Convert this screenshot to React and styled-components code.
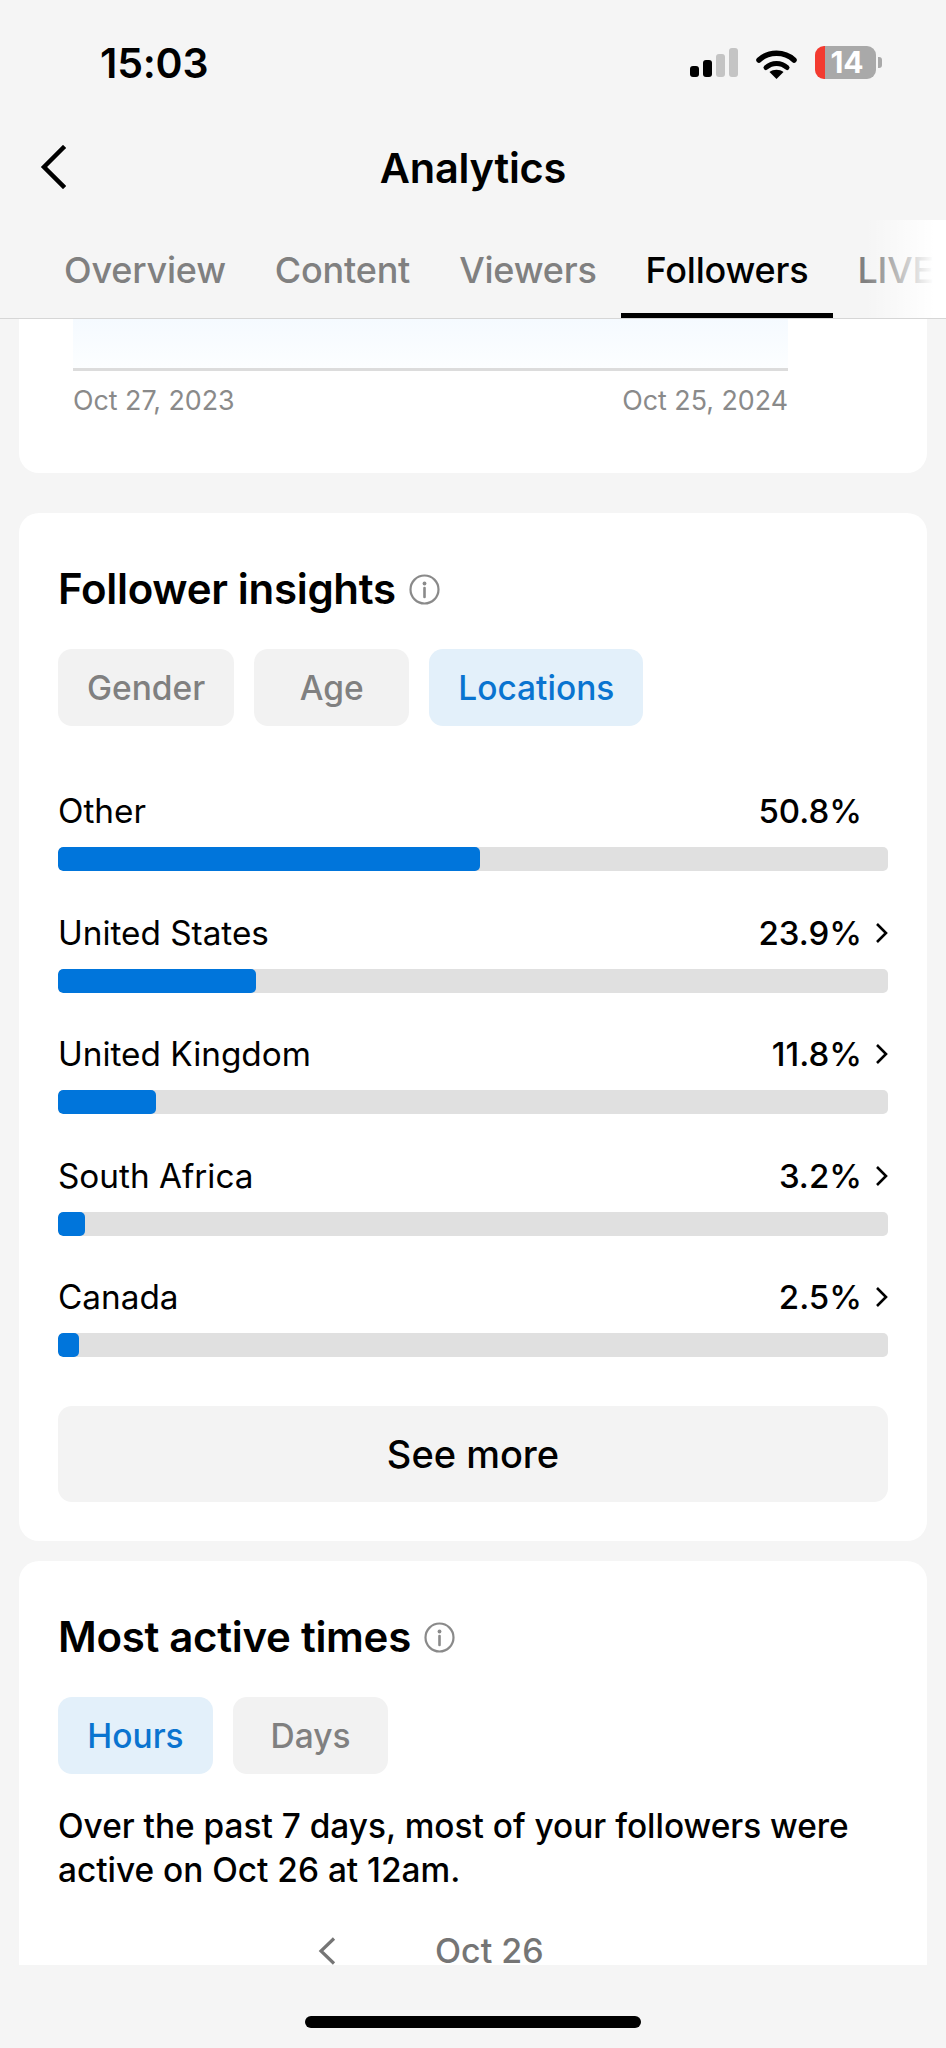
import React from "react";
import styled, { createGlobalStyle } from "styled-components";

const Global = createGlobalStyle`
  html, body {
    margin: 0;
    padding: 0;
    background: #f5f5f5;
  }
  * {
    box-sizing: border-box;
  }
`;

const Page = styled.div`
  width: 946px;
  height: 2048px;
  display: flex;
  flex-direction: column;
  overflow: hidden;
  background: #f5f5f5;
  color: #000;
  font-family: Inter, "Liberation Sans", sans-serif;
`;

const StatusBar = styled.div`
  height: 125px;
  flex: none;
  padding: 44px 64px 0 100px;
  display: flex;
  justify-content: space-between;
  align-items: flex-start;
`;

const Clock = styled.div`
  font-size: 41px;
  line-height: 38px;
  font-weight: 600;
  letter-spacing: -0.2px;
`;

const StatusIcons = styled.div`
  display: flex;
  align-items: flex-end;
  margin-top: 2px;
`;

const Signal = styled.div`
  display: flex;
  align-items: flex-end;
  gap: 4px;
  height: 29px;
  margin-right: 18px;
  margin-bottom: 2px;
`;

const SignalBar = styled.span`
  width: 9px;
  height: ${(props) => props.h}px;
  border-radius: 3px;
  background: ${(props) => (props.on ? "#000" : "#c4c4c4")};
`;

const Battery = styled.div`
  width: 61px;
  height: 33px;
  margin-left: 18px;
  border-radius: 9px;
  display: flex;
  align-items: center;
  justify-content: center;
  padding-left: 3px;
  font-size: 30px;
  line-height: 33px;
  font-weight: 700;
  color: #fff;
  background: linear-gradient(to right, #f33b30 10px, #a9a9a9 10px);
`;

const BatteryCap = styled.span`
  width: 4px;
  height: 11px;
  margin: 0 0 11px 2px;
  border-radius: 0 3px 3px 0;
  background: #a9a9a9;
`;

const NavBar = styled.div`
  height: 86px;
  flex: none;
  position: relative;
  display: flex;
  align-items: center;
  justify-content: center;
`;

const BackButton = styled.div`
  position: absolute;
  left: 40px;
  top: 20px;
  display: flex;
`;

const Title = styled.h1`
  margin: 0;
  font-size: 41.5px;
  line-height: 86px;
  font-weight: 600;
  letter-spacing: -0.2px;
`;

const Tabs = styled.div`
  height: 108px;
  flex: none;
  position: relative;
  display: flex;
  align-items: flex-end;
  padding-left: 39.5px;
  overflow: hidden;
  border-bottom: 1px solid #d6d6d6;
`;

const Tab = styled.div`
  flex: none;
  height: 98px;
  padding: 28px 24.5px 0;
  font-size: 36px;
  line-height: 44px;
  font-weight: 500;
  letter-spacing: -0.2px;
  color: ${(props) => (props.active ? "#000" : "#808080")};
  border-bottom: 5px solid ${(props) => (props.active ? "#000" : "transparent")};
`;

const TabFade = styled.div`
  position: absolute;
  right: 0;
  top: 9px;
  bottom: 0;
  width: 80px;
  background: linear-gradient(to right, rgba(255, 255, 255, 0), #fff 85%);
`;

const Scroller = styled.div`
  flex: 1;
  min-height: 0;
  overflow: hidden;
  padding: 0 19px;
`;

const Card = styled.section`
  background: #fff;
  border-radius: ${(props) => (props.cut ? "0 0 20px 20px" : "20px")};
  margin-bottom: ${(props) => props.gap || 0}px;
  padding: ${(props) => props.pad};
`;

const ChartFoot = styled.div`
  height: 52px;
  margin-right: 139px;
  background: linear-gradient(to bottom, #f5faff, #fcfeff);
  border-bottom: 3px solid #dcdcdc;
`;

const ChartDates = styled.div`
  margin-right: 139px;
  padding-top: 12px;
  height: 102px;
  display: flex;
  justify-content: space-between;
  font-size: 26.8px;
  line-height: 34px;
  color: #8a8a8a;
`;

const Heading = styled.div`
  display: flex;
  align-items: center;
  gap: 13px;
  height: 48px;
`;

const HeadingText = styled.h2`
  margin: 0;
  font-size: 42px;
  line-height: 48px;
  font-weight: 600;
  letter-spacing: -0.3px;
`;

const Chips = styled.div`
  display: flex;
  gap: 20px;
  margin-top: 36px;
`;

const Chip = styled.div`
  height: 77px;
  min-width: 155px;
  padding: 0 29px;
  display: flex;
  align-items: center;
  justify-content: center;
  border-radius: 14px;
  font-size: 33.5px;
  font-weight: 500;
  color: ${(props) => (props.active ? "#0a74d0" : "#808080")};
  background: ${(props) => (props.active ? "#e3f0fa" : "#f2f2f2")};
`;

const Rows = styled.div`
  display: flex;
  flex-direction: column;
  gap: 41.5px;
  margin-top: 65px;
`;

const RowHead = styled.div`
  height: 40px;
  display: flex;
  align-items: center;
  justify-content: space-between;
`;

const RowLabel = styled.span`
  font-size: 33.3px;
  line-height: 40px;
`;

const RowValue = styled.span`
  display: flex;
  align-items: center;
  font-size: 33px;
  line-height: 40px;
  font-weight: 500;
`;

const RowChevron = styled.svg`
  width: 13px;
  height: 24px;
  margin-left: 13px;
  visibility: ${(props) => (props.$hide ? "hidden" : "visible")};
`;

const Track = styled.div`
  height: 24px;
  margin-top: 16px;
  border-radius: 5px;
  overflow: hidden;
  background: #e0e0e0;
`;

const Fill = styled.div`
  height: 100%;
  border-radius: 5px;
  background: #0075db;
`;

const SeeMore = styled.div`
  height: 96px;
  margin-top: 49px;
  display: flex;
  align-items: center;
  justify-content: center;
  border-radius: 14px;
  background: #f3f3f3;
  font-size: 38px;
  font-weight: 500;
`;

const Summary = styled.p`
  margin: 30px 0 0;
  font-size: 33.4px;
  line-height: 44px;
  font-weight: 500;
`;

const DateRow = styled.div`
  margin-top: 39px;
  padding-left: 260px;
  display: flex;
  align-items: flex-start;
`;

const DateChevron = styled.svg`
  margin-top: 6px;
  flex: none;
`;

const DateLabel = styled.span`
  margin-left: 99px;
  font-size: 34px;
  line-height: 40px;
  font-weight: 500;
  color: #757575;
`;

const HomeBar = styled.div`
  height: 83px;
  flex: none;
  display: flex;
  justify-content: center;
  padding-top: 51px;
`;

const HomeIndicator = styled.div`
  width: 336px;
  height: 12px;
  border-radius: 6px;
  background: #000;
`;

const InfoIcon = () => (
  <svg width="31" height="31" viewBox="0 0 31 31" fill="none">
    <circle cx="15.5" cy="15.5" r="14" stroke="#8a8a8a" strokeWidth="2.2" />
    <circle cx="15.5" cy="9.5" r="1.9" fill="#8a8a8a" />
    <path d="M15.5 14V23" stroke="#8a8a8a" strokeWidth="2.6" strokeLinecap="round" />
  </svg>
);

const countries = [
  { name: "Other", value: 50.8, last: true },
  { name: "United States", value: 23.9 },
  { name: "United Kingdom", value: 11.8 },
  { name: "South Africa", value: 3.2 },
  { name: "Canada", value: 2.5 },
];

export default function App() {
  return (
    <Page>
      <Global />
      <StatusBar>
        <Clock>15:03</Clock>
        <StatusIcons>
          <Signal>
            <SignalBar h={11} on />
            <SignalBar h={17} on />
            <SignalBar h={23} />
            <SignalBar h={29} />
          </Signal>
          <svg width="41" height="30" viewBox="0 0 41 30" fill="none">
            <path d="M3 11C12.5 2 28.5 2 38 11" stroke="#000" strokeWidth="5.5" strokeLinecap="round" />
            <path d="M10 18.5C16 13 25 13 31 18.5" stroke="#000" strokeWidth="5" strokeLinecap="round" />
            <path d="M20.5 30L13.5 23C17.5 20 23.5 20 27.5 23Z" fill="#000" />
          </svg>
          <Battery>14</Battery>
          <BatteryCap />
        </StatusIcons>
      </StatusBar>

      <NavBar>
        <BackButton>
          <svg width="26" height="44" viewBox="0 0 26 44" fill="none">
            <path d="M23 3L4 22L23 41" stroke="#000" strokeWidth="4.5" strokeLinecap="square" />
          </svg>
        </BackButton>
        <Title>Analytics</Title>
      </NavBar>

      <Tabs>
        <Tab>Overview</Tab>
        <Tab>Content</Tab>
        <Tab>Viewers</Tab>
        <Tab active>Followers</Tab>
        <Tab>LIVE</Tab>
        <TabFade />
      </Tabs>

      <Scroller>
        <Card cut gap={40} pad="0 0 0 54px">
          <ChartFoot />
          <ChartDates>
            <span>Oct 27, 2023</span>
            <span>Oct 25, 2024</span>
          </ChartDates>
        </Card>

        <Card gap={20} pad="52px 39px 39px">
          <Heading>
            <HeadingText>Follower insights</HeadingText>
            <InfoIcon />
          </Heading>
          <Chips>
            <Chip>Gender</Chip>
            <Chip>Age</Chip>
            <Chip active>Locations</Chip>
          </Chips>
          <Rows>
            {countries.map((c) => (
              <div key={c.name}>
                <RowHead>
                  <RowLabel>{c.name}</RowLabel>
                  <RowValue>
                    {c.value}%
                    <RowChevron $hide={c.last} viewBox="0 0 13 24" fill="none">
                      <path d="M2 3L11 12L2 21" stroke="#000" strokeWidth="2.6" />
                    </RowChevron>
                  </RowValue>
                </RowHead>
                <Track>
                  <Fill style={{ width: `${c.value}%` }} />
                </Track>
              </div>
            ))}
          </Rows>
          <SeeMore>See more</SeeMore>
        </Card>

        <Card pad="52px 39px 40px">
          <Heading>
            <HeadingText>Most active times</HeadingText>
            <InfoIcon />
          </Heading>
          <Chips>
            <Chip active>Hours</Chip>
            <Chip>Days</Chip>
          </Chips>
          <Summary>
            Over the past 7 days, most of your followers were active on Oct 26 at 12am.
          </Summary>
          <DateRow>
            <DateChevron width="18" height="28" viewBox="0 0 18 28" fill="none">
              <path d="M16 1.5L3 14L16 26.5" stroke="#757575" strokeWidth="3.2" />
            </DateChevron>
            <DateLabel>Oct 26</DateLabel>
          </DateRow>
        </Card>
      </Scroller>

      <HomeBar>
        <HomeIndicator />
      </HomeBar>
    </Page>
  );
}
